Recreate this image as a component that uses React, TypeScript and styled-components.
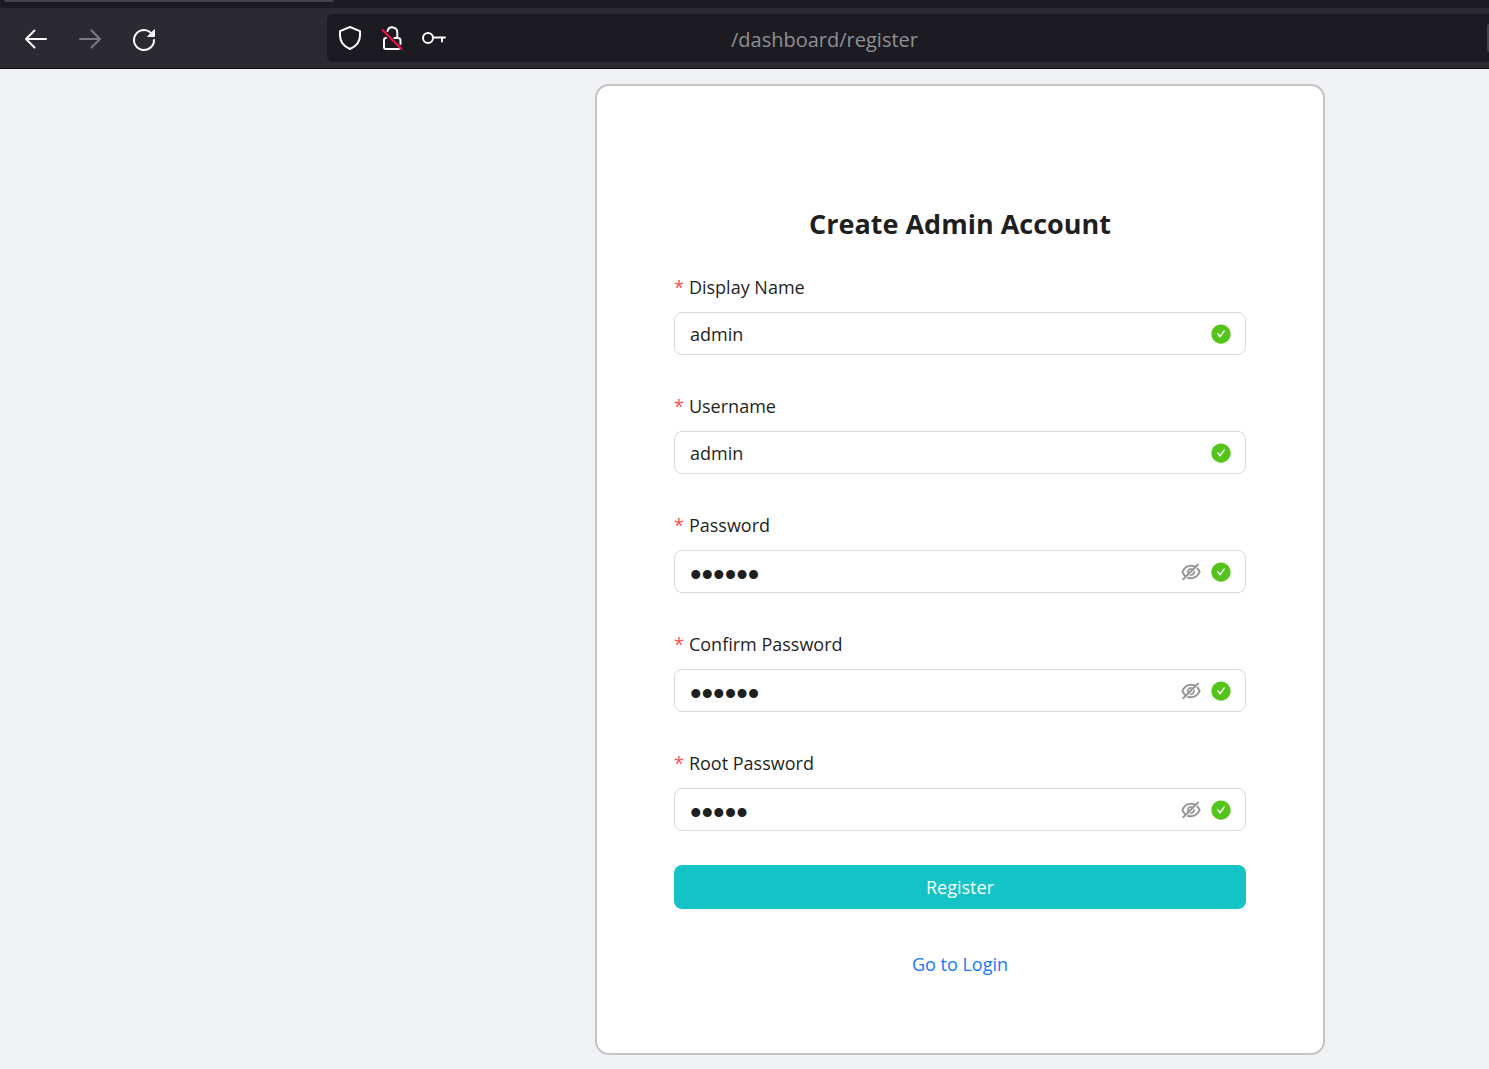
import React from "react";
import styled, { createGlobalStyle } from "styled-components";

const GlobalStyle = createGlobalStyle`
  *, *::before, *::after { box-sizing: border-box; }
  body {
    margin: 0;
    background: #f0f1f5;
    color: #1f1f1f;
    font-family: "Segoe UI", "Open Sans", "Noto Sans", sans-serif;
    font-size: 18px;
    line-height: 28px;
  }
  button, input { font: inherit; color: inherit; }
`;

const Browser = styled.header`
  background: #1c1b22;
  border-bottom: 1px solid #0c0c0d;
`;

const TabStrip = styled.div`
  height: 8px;
  padding-left: 4px;
`;

const ActiveTab = styled.div`
  width: 330px;
  height: 2px;
  background: #42414d;
  border-radius: 0 0 4px 4px;
`;

const Toolbar = styled.div`
  display: flex;
  align-items: center;
  height: 60px;
  background: #2b2a33;
`;

const NavButtons = styled.nav`
  display: flex;
  flex: 0 0 327px;
  gap: 22px;
  padding: 2px 0 0 20px;
`;

const NavButton = styled.button`
  display: flex;
  padding: 0;
  border: 0;
  background: none;
  color: #fbfbfe;
  &:disabled { color: #7b7a84; }
`;

const AddressBar = styled.div`
  display: flex;
  flex: 1;
  align-items: center;
  gap: 14px;
  height: 48px;
  padding-left: 9px;
  background: #1c1b22;
  border-radius: 6px 0 0 6px;
`;

const SiteButton = styled(NavButton)``;

const Address = styled.input`
  flex: 1;
  min-width: 0;
  padding: 3px 0 0 269px;
  border: 0;
  outline: 0;
  background: none;
  color: #8f8f94;
  font-size: 20px;
`;

const ZoomBadge = styled.span`
  width: 2px;
  height: 28px;
  background: #42414d;
  border-radius: 2px 0 0 2px;
`;

const Page = styled.main`
  display: flex;
  justify-content: flex-end;
  padding: 15px 164px 14px 16px;
`;

const Card = styled.form`
  display: flex;
  flex-direction: column;
  flex: 0 1 730px;
  padding: 118px 77px 75px;
  background: #fff;
  border: 2px solid #c8c2c2;
  border-radius: 14px;
`;

const Title = styled.h1`
  margin: 0 0 29px;
  font-size: 27px;
  font-weight: 700;
  line-height: 40px;
  text-align: center;
`;

const Fields = styled.div`
  display: flex;
  flex-direction: column;
  gap: 37px;
`;

const Field = styled.div`
  display: flex;
  flex-direction: column;
  gap: 11px;
`;

const Label = styled.label`
  display: flex;
  gap: 5px;
  &::before {
    content: "*";
    color: #ff4d4f;
  }
`;

const InputBox = styled.div`
  display: flex;
  align-items: center;
  gap: 8px;
  height: 43px;
  padding: 0 13px 0 15px;
  border: 1px solid #d9d9d9;
  border-radius: 8px;
`;

const Input = styled.input`
  flex: 1;
  min-width: 0;
  padding: 0;
  border: 0;
  outline: 0;
  background: none;

  &[type="password"] {
    height: 41px;
    padding-top: 6px;
    font-family: "Liberation Sans", Arial, sans-serif;
    font-size: 33px;
  }
`;

const RevealButton = styled.button`
  display: flex;
  padding: 0;
  border: 0;
  background: none;
  color: #8c8c8c;
`;

const RegisterButton = styled.button`
  height: 44px;
  margin: 34px 0 41px;
  border: 0;
  border-radius: 8px;
  background: #14c3c5;
  color: #fff;
`;

const LoginLink = styled.a`
  align-self: center;
  color: #1677ff;
  text-decoration: none;
`;

const BackIcon = () => (
  <svg width="32" height="32" viewBox="0 0 32 32" fill="none" stroke="currentColor" strokeWidth="2" strokeLinecap="round" strokeLinejoin="round">
    <path d="M26 16H6M14.500 7.500L6 16l8.500 8.500" />
  </svg>
);

const ForwardIcon = () => (
  <svg width="32" height="32" viewBox="0 0 32 32" fill="none" stroke="currentColor" strokeWidth="2" strokeLinecap="round" strokeLinejoin="round">
    <path d="M6 16h20M17.500 7.500L26 16l-8.500 8.500" />
  </svg>
);

const ReloadIcon = () => (
  <svg width="32" height="32" viewBox="0 0 32 32" fill="none" stroke="currentColor" strokeWidth="2" strokeLinecap="round">
    <path d="M26 17a10 10 0 1 1-3.500-7.600" />
    <path d="M26.500 7v6.500H20z" fill="currentColor" strokeWidth="1" strokeLinejoin="round" />
  </svg>
);

const ShieldIcon = () => (
  <svg width="28" height="28" viewBox="0 0 28 28" fill="none" stroke="currentColor" strokeWidth="2" strokeLinejoin="round">
    <path d="M14 3l10 4.200v4.300c0 6-3.600 10.700-10 13.500C7.600 22.200 4 17.500 4 11.500V7.200z" />
  </svg>
);

const InsecureIcon = () => (
  <svg width="28" height="28" viewBox="0 0 28 28" fill="none" stroke="currentColor" strokeWidth="2" strokeLinecap="round">
    <path d="M9.500 7a5 5 0 0 1 9.800 1.500V14M16.500 14H20a2.500 2.500 0 0 1 2.500 2.500V20M8 14a2 2 0 0 0-2 2v7a2 2 0 0 0 2 2h13" />
    <path d="M4.500 6l19 19" stroke="#ff0f42" />
  </svg>
);

const KeyIcon = () => (
  <svg width="28" height="28" viewBox="0 0 28 28" fill="none" stroke="currentColor" strokeWidth="2" strokeLinecap="round">
    <circle cx="8" cy="14" r="5" />
    <path d="M13.500 13.500H25M22 13.500v4" />
  </svg>
);

const EyeOffIcon = () => (
  <svg width="22" height="22" viewBox="0 0 1024 1024" fill="currentColor" stroke="currentColor" strokeWidth="14">
    <path d="M942.2 486.2Q889.47 375.11 816.7 305l-50.88 50.88C807.31 395.53 843.45 447.4 874.7 512 791.5 684.2 673.4 766 512 766q-72.67 0-133.87-22.38L323 798.75Q408 838 512 838q288.3 0 430.2-300.3a60.29 60.29 0 000-51.5zm-63.57-320.64L836 122.88a8 8 0 00-11.32 0L715.31 232.2Q624.86 186 512 186q-288.3 0-430.2 300.3a60.3 60.3 0 000 51.5q56.69 119.4 136.5 191.41L112.48 835a8 8 0 000 11.31L155.17 889a8 8 0 0011.31 0l712.15-712.12a8 8 0 000-11.32zM149.3 512C232.6 339.8 350.7 258 512 258c54.54 0 104.13 9.36 149.12 28.39l-70.3 70.3a176 176 0 00-238.13 238.13l-83.42 83.42C223.1 637.49 183.3 582.28 149.3 512zm246.7 0a112.11 112.11 0 01146.2-106.69L401.31 546.2A112 112 0 01396 512z" />
    <path d="M508 624c-3.46 0-6.87-.16-10.25-.47l-52.82 52.82a176.09 176.09 0 00227.42-227.42l-52.82 52.82c.31 3.38.47 6.79.47 10.25a111.94 111.94 0 01-112 112z" />
  </svg>
);

const ValidIcon = () => (
  <svg width="22" height="22" viewBox="0 0 1024 1024" fill="#52c41a" aria-hidden="true">
    <path d="M512 64C264.6 64 64 264.6 64 512s200.600 448 448 448 448-200.600 448-448S759.400 64 512 64zm193.500 301.700l-210.600 292a31.800 31.800 0 01-51.700 0L318.500 484.900c-3.800-5.300 0-12.700 6.500-12.700h46.900c10.200 0 19.900 4.900 25.900 13.300l71.200 98.800 157.200-218c6-8.300 15.600-13.300 25.900-13.300H699c6.500 0 10.300 7.400 6.500 12.700z" />
  </svg>
);

const fields = [
  { id: "displayName", label: "Display Name", value: "admin", secret: false },
  { id: "username", label: "Username", value: "admin", secret: false },
  { id: "password", label: "Password", value: "secret", secret: true },
  { id: "confirmPassword", label: "Confirm Password", value: "secret", secret: true },
  { id: "rootPassword", label: "Root Password", value: "admin", secret: true },
];

export default function App() {
  return (
    <>
      <GlobalStyle />
      <Browser>
        <TabStrip>
          <ActiveTab />
        </TabStrip>
        <Toolbar>
          <NavButtons>
            <NavButton type="button" aria-label="Back"><BackIcon /></NavButton>
            <NavButton type="button" aria-label="Forward" disabled><ForwardIcon /></NavButton>
            <NavButton type="button" aria-label="Reload"><ReloadIcon /></NavButton>
          </NavButtons>
          <AddressBar>
            <SiteButton type="button" aria-label="Tracking protection"><ShieldIcon /></SiteButton>
            <SiteButton type="button" aria-label="Connection not secure"><InsecureIcon /></SiteButton>
            <SiteButton type="button" aria-label="Saved logins"><KeyIcon /></SiteButton>
            <Address aria-label="Address" defaultValue="/dashboard/register" />
            <ZoomBadge />
          </AddressBar>
        </Toolbar>
      </Browser>
      <Page>
        <Card onSubmit={(event: React.FormEvent) => event.preventDefault()}>
          <Title>Create Admin Account</Title>
          <Fields>
            {fields.map((field) => (
              <Field key={field.id}>
                <Label htmlFor={field.id}>{field.label}</Label>
                <InputBox>
                  <Input
                    id={field.id}
                    type={field.secret ? "password" : "text"}
                    defaultValue={field.value}
                    required
                  />
                  {field.secret && (
                    <RevealButton type="button" aria-label="Show password">
                      <EyeOffIcon />
                    </RevealButton>
                  )}
                  <ValidIcon />
                </InputBox>
              </Field>
            ))}
          </Fields>
          <RegisterButton type="submit">Register</RegisterButton>
          <LoginLink href="#login">Go to Login</LoginLink>
        </Card>
      </Page>
    </>
  );
}
